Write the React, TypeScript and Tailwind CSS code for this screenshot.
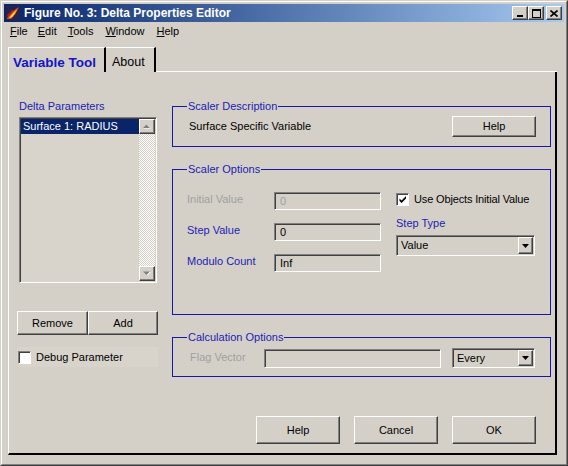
import type { ReactNode } from "react";

const raised =
  "border border-t-white border-l-white border-r-[#404040] border-b-[#404040] shadow-[inset_-1px_-1px_0_#808080] bg-[#d4d0c8]";
const sunken =
  "border border-t-[#808080] border-l-[#808080] border-r-white border-b-white shadow-[inset_1px_1px_0_#404040]";

const blue = "text-[#1c1cb4]";
const grey = "text-[#a0a0a0]";

const FigureIcon = () => (
  <svg width="16" height="16" viewBox="0 0 16 16">
    <rect x="1" y="1" width="14" height="14" fill="#24244c" />
    <path d="M2 14 C3 10 6 7 14 2 C12 7 9 11 6 14 Z" fill="#e04818" />
    <path d="M4 13 C5 10 8 8 12 4 C11 8 9 11 6 13 Z" fill="#ffb020" />
    <path d="M2 10 C4 8 6 7 8 4 C8 8 6 10 3 12 Z" fill="#c81818" />
    <path d="M6 11 C7 10 8 9 10 7 C9 9 8 10 7 12 Z" fill="#fff080" />
  </svg>
);

const TitleBtn = ({ children, className = "" }: { children: ReactNode; className?: string }) => (
  <span className={`${raised} flex h-[14px] w-[16px] items-center justify-center ${className}`}>
    {children}
  </span>
);

const TitleBar = () => (
  <div className="flex h-[18px] items-center bg-linear-to-r from-[#0a246a] to-[#a6caf0] pl-[1px] pr-[2px]">
    <FigureIcon />
    <span className="ml-[3px] flex-1 text-[12px] font-bold leading-none text-white">
      Figure No. 3: Delta Properties Editor
    </span>
    <div className="flex items-center">
      <TitleBtn>
        <svg width="8" height="7" viewBox="0 0 8 7">
          <rect x="1" y="5" width="6" height="2" fill="#000" />
        </svg>
      </TitleBtn>
      <TitleBtn>
        <svg width="9" height="9" viewBox="0 0 9 9">
          <path d="M0 0h9v9H0z M1 2v6h7V2z" fill="#000" fillRule="evenodd" />
        </svg>
      </TitleBtn>
      <TitleBtn className="ml-[2px]">
        <svg width="8" height="7" viewBox="0 0 8 7">
          <path d="M0.5 0.5 L7.5 6.5 M7.5 0.5 L0.5 6.5" stroke="#000" strokeWidth="1.6" />
        </svg>
      </TitleBtn>
    </div>
  </div>
);

const MenuItem = ({ first, rest, className = "" }: { first: string; rest: string; className?: string }) => (
  <span className={className}>
    <span className="underline underline-offset-[1px]">{first}</span>
    {rest}
  </span>
);

const MenuBar = () => (
  <div className="flex h-[19px] items-center pl-[6px] text-[11px]">
    <MenuItem first="F" rest="ile" />
    <MenuItem first="E" rest="dit" className="ml-[10px]" />
    <MenuItem first="T" rest="ools" className="ml-[11px]" />
    <MenuItem first="W" rest="indow" className="ml-[12px]" />
    <MenuItem first="H" rest="elp" className="ml-[12px]" />
  </div>
);

const Button = ({ label, className = "" }: { label: string; className?: string }) => (
  <button
    type="button"
    className={`${raised} flex items-center justify-center text-[11px] leading-none text-black ${className}`}
  >
    {label}
  </button>
);

const CheckBox = ({ checked = false }: { checked?: boolean }) => (
  <span className={`${sunken} flex h-[13px] w-[13px] shrink-0 items-center justify-center bg-white`}>
    {checked && (
      <svg width="8" height="8" viewBox="0 0 8 8">
        <path d="M0.5 3.5 L2.5 5.5 L7 1 L7 3.5 L2.5 8 L0.5 6 Z" fill="#000" />
      </svg>
    )}
  </span>
);

const DownArrow = () => (
  <svg width="7" height="4" viewBox="0 0 7 4">
    <path d="M0 0h7L3.5 4z" fill="#000" />
  </svg>
);

const Select = ({ value, className = "" }: { value: string; className?: string }) => (
  <div className={`${sunken} flex items-stretch bg-[#d4d0c8] p-[1px] ${className}`}>
    <span className="flex flex-1 items-center pl-[3px] text-[11px] leading-none">{value}</span>
    <span className={`${raised} flex w-[15px] items-center justify-center`}>
      <DownArrow />
    </span>
  </div>
);

const TextBox = ({ value, disabled = false, className = "" }: { value: string; disabled?: boolean; className?: string }) => (
  <div
    className={`${sunken} bg-[#d4d0c8] pl-[5px] text-[11px] leading-[16px] ${disabled ? grey : "text-black"} ${className}`}
  >
    {value}
  </div>
);

const ScrollArrow = ({ up }: { up: boolean }) => (
  <span className={`${raised} flex h-[15px] w-[16px] items-center justify-center`}>
    <svg width="8" height="5" viewBox="0 0 8 5">
      {up ? (
        <>
          <path d="M1 4.5h7L4.5 1z" fill="#fff" />
          <path d="M0 4h7L3.5 0.5z" fill="#808080" />
        </>
      ) : (
        <>
          <path d="M1 1h7L4.5 4.5z" fill="#fff" />
          <path d="M0 0.5h7L3.5 4z" fill="#808080" />
        </>
      )}
    </svg>
  </span>
);

const Group = ({ title, className = "", children }: { title: string; className?: string; children: ReactNode }) => (
  <fieldset className={`min-w-0 border border-[#1818a8] ${className}`}>
    <legend className={`ml-[14px] px-[1px] text-[11px] leading-[14px] ${blue}`}>{title}</legend>
    {children}
  </fieldset>
);

const Tabs = () => (
  <div className="flex h-[25px] w-[549px]">
    <div className="w-[98px] border-t border-l border-t-white border-l-white border-r-2 border-r-black pl-[4px] pt-[8px] text-[13.5px] font-bold leading-none text-[#1414c8]">
      Variable Tool
    </div>
    <div className="w-[50px] border-t border-t-white border-r-2 border-r-black pl-[6px] pt-[8px] text-[12.5px] leading-none">
      About
    </div>
    <div className="flex-1 border-b border-b-white" />
  </div>
);

const LeftColumn = () => (
  <div className="flex w-[141px] flex-col">
    <div className={`pl-[2px] leading-[14px] ${blue}`}>Delta Parameters</div>
    <div className={`${sunken} ml-[2px] mt-[4px] flex h-[166px] w-[138px] bg-[#d8d4cc] p-[1px]`}>
      <div className="flex-1">
        <div className="h-[15px] bg-[#0a246a] pl-[2px] leading-[15px] text-white">Surface 1: RADIUS</div>
      </div>
      <div className="flex w-[16px] flex-col bg-[image:repeating-conic-gradient(#ffffff_0%_25%,#d4d0c8_0%_50%)] bg-[length:2px_2px]">
        <ScrollArrow up />
        <div className="flex-1" />
        <ScrollArrow up={false} />
      </div>
    </div>
    <div className="mt-[28px] flex h-[24px]">
      <Button label="Remove" className="w-[71px]" />
      <Button label="Add" className="w-[70px]" />
    </div>
    <div className="mt-[12px] flex h-[20px] items-center bg-[#d8d4cc] pl-[1px]">
      <CheckBox />
      <span className="ml-[5px]">Debug Parameter</span>
    </div>
  </div>
);

const optionRows = [
  { label: "Initial Value", value: "0", disabled: true },
  { label: "Step Value", value: "0", disabled: false },
  { label: "Modulo Count", value: "Inf", disabled: false },
];

const RightColumn = () => (
  <div className="ml-[14px] flex w-[379px] flex-col">
    <Group title="Scaler Description" className="h-[48px]">
      <div className="mt-[3px] flex items-center justify-between pl-[16px] pr-[14px]">
        <span>Surface Specific Variable</span>
        <Button label="Help" className="h-[21px] w-[84px]" />
      </div>
    </Group>

    <Group title="Scaler Options" className="mt-[15px] h-[153px]">
      <div className="mt-[16px] flex pl-[14px]">
        <div className="flex flex-col gap-[13px]">
          {optionRows.map((row) => (
            <div key={row.label} className="flex h-[18px]">
              <span className={`w-[87px] leading-[14px] ${row.disabled ? grey : blue}`}>{row.label}</span>
              <TextBox value={row.value} disabled={row.disabled} className="h-[18px] w-[107px]" />
            </div>
          ))}
        </div>
        <div className="ml-[15px] flex flex-col">
          <div className="flex h-[14px] items-center">
            <CheckBox checked />
            <span className="ml-[5px] tracking-[-0.15px]">Use Objects Initial Value</span>
          </div>
          <span className={`mt-[10px] leading-[14px] ${blue}`}>Step Type</span>
          <Select value="Value" className="mt-[5px] h-[21px] w-[139px]" />
        </div>
      </div>
    </Group>

    <Group title="Calculation Options" className="mt-[15px] h-[47px]">
      <div className="mt-[4px] flex items-start pl-[17px]">
        <span className={`w-[74px] pt-[2px] leading-[14px] ${grey}`}>Flag Vector</span>
        <TextBox value="" disabled className="mt-[1px] h-[19px] w-[177px]" />
        <Select value="Every" className="ml-[11px] h-[20px] w-[83px]" />
      </div>
    </Group>

    <div className="mt-[39px] flex justify-end gap-[14px] pr-[15px]">
      <Button label="Help" className="h-[28px] w-[84px]" />
      <Button label="Cancel" className="h-[28px] w-[84px]" />
      <Button label="OK" className="h-[28px] w-[84px]" />
    </div>
  </div>
);

export default function App() {
  return (
    <div className="h-[466px] w-[568px] overflow-hidden border border-t-[#d4d0c8] border-l-[#d4d0c8] border-r-[#404040] border-b-[#404040] bg-[#d4d0c8] font-['Liberation_Sans',Arial,sans-serif] text-[11px] text-black">
      <div className="flex h-full flex-col border border-t-white border-l-white border-r-[#808080] border-b-[#808080] p-[2px]">
        <TitleBar />
        <MenuBar />
        <div className="pl-[4px] pt-[6px]">
          <Tabs />
          <div className="flex h-[383px] w-[549px] border-l border-r-2 border-b-2 border-l-white border-r-black border-b-black pl-[8px] pt-[27px]">
            <LeftColumn />
            <RightColumn />
          </div>
        </div>
      </div>
    </div>
  );
}
